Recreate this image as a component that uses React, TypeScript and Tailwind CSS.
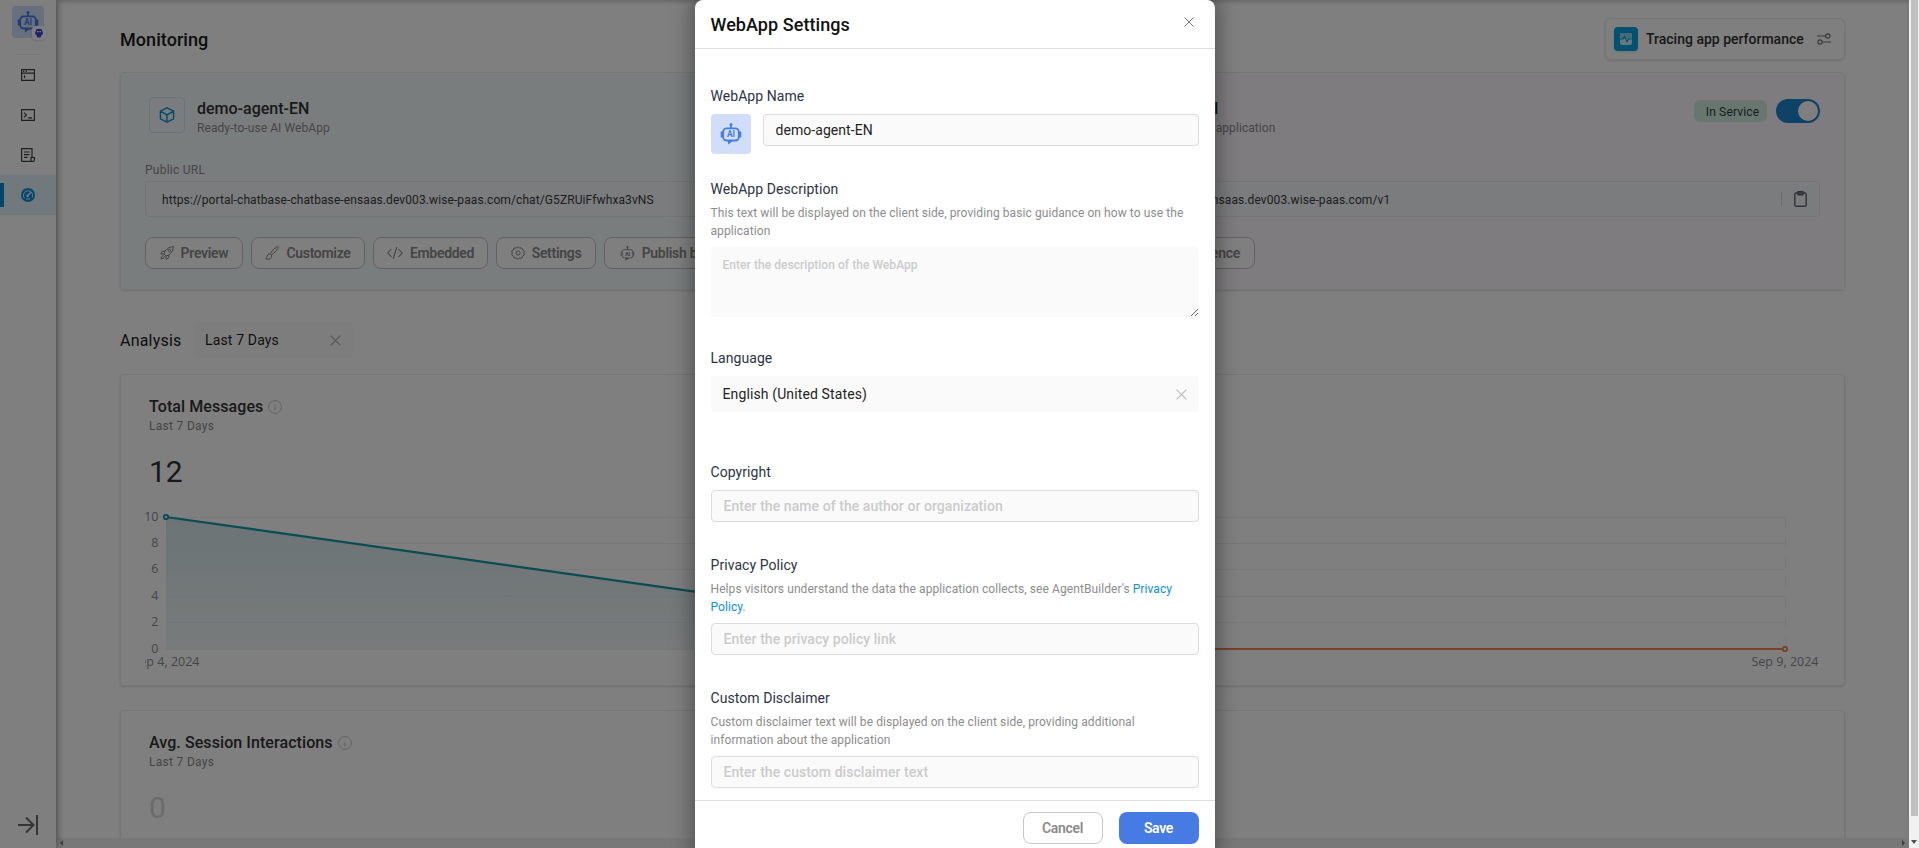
import React from "react";

const RobotIcon = ({ size, stroke = 1.8, line = false }: { size: number; stroke?: number; line?: boolean }) => (
  <svg width={size} height={size} viewBox="0 0 22 22" fill="none" stroke="currentColor" strokeWidth={stroke} strokeLinejoin="round">
    <circle cx="11" cy="1.600" r="1.500" fill="currentColor" stroke="none" />
    <path d="M11 2v3.500" />
    <rect x="3.200" y="5.300" width="15.600" height="12.200" rx="3.400" />
    <path d="M1.800 8.400v6M20.200 8.400v6" strokeWidth={line ? stroke : 2.2} />
    <path d="M7.600 17.600h6L8.200 21.600z" fill="currentColor" stroke="none" />
    <text x="11" y="14.400" textAnchor="middle" fontSize="8.500" fontWeight="700" fontFamily="Roboto" fill="currentColor" stroke="none">AI</text>
  </svg>
);

const Cross = ({ size, className = "" }: { size: number; className?: string }) => (
  <svg width={size} height={size} viewBox="0 0 10 10" fill="none" stroke="currentColor" strokeWidth="1" className={className}>
    <path d="M.5.5l9 9M9.500.500l-9 9" />
  </svg>
);

const InfoIcon = () => (
  <svg width="14" height="14" viewBox="0 0 14 14" fill="none" stroke="#c4c4c4" strokeWidth="1">
    <circle cx="7" cy="7" r="6.400" />
    <path d="M7 6.500v3.500M7 4.500v1" />
  </svg>
);

const stroke14 = { width: 14, height: 14, viewBox: "0 0 14 14", fill: "none", stroke: "currentColor", strokeWidth: 1.2 };

const navIcons = [
  <svg {...stroke14} key="a">
    <path d="M.6 1.600h12.800v10.800H.6zM.6 5.200h12.800M3.500 7.300v2.600" />
    <path d="M2 3.400h1.300M4.600 3.400h1.300" />
  </svg>,
  <svg {...stroke14} key="b">
    <path d="M.6 1.600h12.800v10.800H.6zM3 4.600l2.400 2.300L3 9.300M7 9.800h4" />
  </svg>,
  <svg {...stroke14} key="c">
    <path d="M11 9.500V.6H.6v11.800q0 1 1 1h10.300q1.500 0 1.500-1.500V9.500H10v2.400q0 1.500 1.500 1.500M3 4h5.500M3 6.700h5.500M3 9.400h3.500" />
  </svg>,
];

const NavRail = () => (
  <aside className="z-10 flex w-14 shrink-0 flex-col items-center bg-white pt-1.5 shadow-[2px_0_7px_rgba(0,0,0,0.35)]">
    <div className="relative flex size-8 shrink-0 items-center justify-center rounded bg-[#d1defa] text-[#477be4]">
      <RobotIcon size={22} />
      <div className="absolute -right-0.5 -bottom-0.5 flex size-3.5 items-center justify-center rounded bg-white shadow">
        <svg width="8" height="10" viewBox="0 0 8 10">
          <path d="M1 1.500q3-1.500 6 0v2h.8v3H7L5.500 9.500h-3L1 6.500H.2v-3H1z" fill="#4a3fd6" />
          <path d="M2 3.600h4" stroke="#fff" strokeWidth="1.200" strokeDasharray="1.500 1" />
        </svg>
      </div>
    </div>
    <div className="mt-4 h-px w-6 shrink-0 bg-[#ececec]" />
    {navIcons.map((icon, i) => (
      <div key={i} className="flex h-10 w-full shrink-0 items-center justify-center text-[#3f3f3f]">{icon}</div>
    ))}
    <div className="flex h-10 w-full shrink-0 items-center bg-[#e3f3f8]">
      <div className="h-6 w-1 bg-[#008ad6]" />
      <svg width="14" height="14" viewBox="0 0 14 14" className="ml-[17px]">
        <circle cx="7" cy="7" r="7" fill="#0a8fdc" />
        <path d="M3.200 10.200A4.700 4.700 0 1 1 11.200 9.600M5 11h4" stroke="#e3f3f8" fill="none" />
        <path d="M6.500 8L10 4.300" stroke="#e3f3f8" strokeWidth="1.500" />
        <circle cx="6.600" cy="7.900" r="1.300" fill="#e3f3f8" />
      </svg>
    </div>
    <svg width="20" height="20" viewBox="0 0 20 20" fill="none" stroke="#6b6b6b" strokeWidth="2" className="mt-auto mb-[13px]">
      <path d="M0 10h15M8 2.500l7.500 7.500L8 17.500M19 0v20" />
    </svg>
  </aside>
);

const CubeIcon = () => (
  <svg width="16" height="16" viewBox="0 0 16 16" fill="none" stroke="#0a93dc" strokeWidth="1.400" strokeLinejoin="round">
    <path d="M8 .800l6.600 3.400v7.600L8 15.200l-6.600-3.400V4.200zM1.400 4.200L8 7.800l6.600-3.600M8 7.800v7.400" />
  </svg>
);

const actionIcons: Record<string, React.ReactNode> = {
  Preview: (
    <svg {...stroke14} strokeWidth={1}>
      <path d="M13.500.5Q8.500.5 5 5L4 8l2 2 3-1q4.500-3.500 4.500-8.500zM5 5L2 5.500.8 8 4 8M9 9l-.5 3L6 13.300 6 10M3.500 9.500Q1 10 1 13q3 0 3.500-2.500" />
      <circle cx="9.400" cy="4.600" r="1.200" />
    </svg>
  ),
  Customize: (
    <svg {...stroke14} strokeWidth={1}>
      <path d="M5 7.500Q9 2 12.500.6q1 0 .9.900Q12 5 6.500 9zM5 7.500L6.500 9q1 2.500-1.500 3.800-2 .8-4.500.2 1.500-1 1.500-2.500Q2.500 8 5 7.500z" />
    </svg>
  ),
  Embedded: (
    <svg width="16" height="14" viewBox="0 0 16 14" fill="none" stroke="currentColor" strokeWidth="1.100">
      <path d="M4.500 3L.800 7l3.700 4M11.500 3l3.700 4-3.700 4M9.800 1.200L6.200 12.800" />
    </svg>
  ),
  Settings: (
    <svg {...stroke14} strokeWidth={1}>
      <path d="M7 .7l1.700 1.300 2.100-.1.800 2L13.300 5l-.6 2 .6 2-1.700 1.100-.8 2-2.100-.1L7 13.300 5.300 12l-2.100.1-.8-2L.7 9l.6-2-.6-2 1.700-1.100.8-2 2.100.1z" strokeLinejoin="round" />
      <circle cx="7" cy="7" r="2.100" />
    </svg>
  ),
  "Publish bot": <RobotIcon size={15} stroke={1.4} line />,
};

const ActionButton = ({ label, className = "" }: { label: string; className?: string }) => (
  <button className={`flex h-8 shrink-0 items-center justify-center gap-[7px] rounded-lg border border-[#c4c4c4] bg-white text-sm font-semibold tracking-[-0.3px] whitespace-nowrap text-[#8a8a8a] ${className}`}>
    {actionIcons[label]}
    {label}
  </button>
);

const UrlBox = ({ url, children }: { url: string; children?: React.ReactNode }) => (
  <div className="flex h-9 items-center rounded border border-[#e6e8ea] bg-[#f6f8fa]/90 pr-3 pl-4 text-xs tracking-[0.1px] text-[#3c3c3c]">
    <span className="pt-px whitespace-nowrap">{url}</span>
    {children}
  </div>
);

const ServiceCards = () => (
  <section className="mt-3 flex h-[218px] shrink-0 rounded border border-[#ececec] shadow-sm">
    <div className="w-1/2 bg-[#f5fbfd] px-6 pt-6">
      <div className="flex h-9 pl-1">
        <div className="flex size-9 items-center justify-center rounded border border-[#cfe9f0] bg-[#f4f8fb]"><CubeIcon /></div>
        <div className="ml-3 pt-0.5">
          <div className="text-base leading-5 font-medium text-[#333]">demo-agent-EN</div>
          <div className="text-xs leading-[18px] tracking-[0.08px] text-[#8c8c8c]">Ready-to-use AI WebApp</div>
        </div>
      </div>
      <div className="mt-7 mb-0.5 text-xs leading-[18px] tracking-[0.25px] text-[#8c8c8c]">Public URL</div>
      <UrlBox url="https://portal-chatbase-chatbase-ensaas.dev003.wise-paas.com/chat/G5ZRUiFfwhxa3vNS" />
      <div className="mt-5 flex gap-2">
        <ActionButton label="Preview" className="w-[98px]" />
        <ActionButton label="Customize" className="w-[114px]" />
        <ActionButton label="Embedded" className="w-[115px]" />
        <ActionButton label="Settings" className="w-[100px]" />
        <ActionButton label="Publish bot" className="w-[121px]" />
      </div>
    </div>
    <div className="w-1/2 bg-[#fdf8fd] px-6 pt-6">
      <div className="flex h-9">
        <div className="flex size-9 items-center justify-center rounded border border-[#ead7f0]"><CubeIcon /></div>
        <div className="ml-3 w-[164px] pt-0.5">
          <div className="text-right text-base leading-5 font-medium whitespace-nowrap text-[#333]">Backend service API</div>
          <div className="w-[221px] text-right text-xs leading-[18px] tracking-[0.08px] whitespace-nowrap text-[#8c8c8c]">Easily integrated into your application</div>
        </div>
        <div className="ml-auto flex items-start gap-[9px] pt-0.5">
          <span className="mt-px flex h-[22px] w-[73px] items-center justify-center rounded-md bg-[#d3ecdf] pt-px pl-1 text-xs tracking-[0.15px] text-[#23433a]">In Service</span>
          <span className="flex h-6 w-11 items-center justify-end rounded-full bg-[#1a86cc] p-0.5"><span className="size-5 rounded-full bg-white" /></span>
        </div>
      </div>
      <div className="mt-7 mb-0.5 text-xs leading-[18px] tracking-[0.25px] text-[#8c8c8c]">Service URL</div>
      <UrlBox url="https://portal-chatbase-chatbase-ensaas.dev003.wise-paas.com/v1">
        <span className="mr-3 ml-auto h-3.5 w-px bg-[#dcdde3]" />
        <svg width="13" height="16" viewBox="0 0 13 16" fill="none" stroke="#5f6672" strokeWidth="1.400">
          <rect x=".8" y="2" width="11.400" height="13.200" rx="1.200" />
          <path d="M4 .7h5v3H4z" />
        </svg>
      </UrlBox>
      <div className="mt-5 flex gap-2">
        <ActionButton label="API Key" className="w-[125px]" />
        <ActionButton label="API Reference" className="w-[115px]" />
      </div>
    </div>
  </section>
);

const TICKS = [10, 8, 6, 4, 2, 0];

const MessagesChart = () => (
  <svg width="1675" height="160" viewBox="145 509 1675 160" className="mt-[19px] -ml-1 block" fontFamily="'Open Sans', 'Noto Sans', sans-serif" fontSize="12.500" fill="#6e7079">
    <defs>
      <linearGradient id="area" x1="0" y1="0" x2="0" y2="1">
        <stop offset="0" stopColor="#d6e8ea" />
        <stop offset="1" stopColor="#f1f6f7" />
      </linearGradient>
    </defs>
    <path d="M166 517L913 622.500L1210 649H166z" fill="url(#area)" />
    {TICKS.map((t, i) => (
      <g key={t}>
        <text x="158.500" y={520.5 + i * 26.4} textAnchor="end" opacity=".8">{t}</text>
        <path d={`M166 ${Math.round(516.6 + i * 26.4) + 0.5}H1785`} stroke="#e0e6ee" strokeOpacity=".6" />
      </g>
    ))}
    <path d="M1785.500 517V649" stroke="#eceef2" strokeDasharray="10 10" />
    <path d="M166 517L913 622.500L1210 649" stroke="#109aa2" strokeWidth="2.200" fill="none" />
    <circle cx="166" cy="517" r="2.200" fill="#e6f2f4" stroke="#109aa2" strokeWidth="1.800" />
    <path d="M1210 649H1785" stroke="#f0804a" strokeWidth="2" />
    <circle cx="1785" cy="649" r="2.200" fill="#fff" stroke="#f0804a" strokeWidth="1.800" />
    <text x="166" y="666" textAnchor="middle" opacity=".8">Sep 4, 2024</text>
    <text x="1785" y="666" textAnchor="middle" opacity=".8">Sep 9, 2024</text>
  </svg>
);

const StatCard = ({ title, value, muted, className, children }: { title: string; value: string; muted?: boolean; className: string; children?: React.ReactNode }) => (
  <section className={`shrink-0 rounded border border-[#ececec] bg-white pr-6 pl-7 shadow-sm ${className}`}>
    <div className="flex items-center gap-[5px] pt-5 text-base leading-6 font-medium tracking-[0.08px] text-[#333]">{title}<InfoIcon /></div>
    <div className="text-xs leading-[14px] tracking-[0.3px] text-[#8c8c8c]">Last 7 Days</div>
    <div className={`mt-[21px] text-[30px] leading-9 ${muted ? "text-[#d6d6d6]" : "text-[#333]"}`}>{value}</div>
    {children}
  </section>
);

const Dashboard = () => (
  <main className="flex min-w-0 flex-1 flex-col shadow-[inset_0_3px_4px_-1px_rgba(0,0,0,0.2)]">
    <div className="flex h-[838px] flex-col overflow-hidden pt-[18px] pr-16 pl-16">
      <header className="flex h-[42px] shrink-0 items-center justify-between">
        <h1 className="pt-px text-lg font-medium tracking-[0.06px] text-[#1a1a1a]">Monitoring</h1>
        <div className="flex h-[42px] w-[240px] items-center rounded-md border border-[#ececec] pl-2 shadow-sm">
          <span className="flex size-6 items-center justify-center rounded bg-[#00a5e0] shadow">
            <svg width="12" height="12" viewBox="0 0 12 12">
              <rect width="12" height="12" rx="2" fill="#d9f0f8" />
              <rect width="12" height="6" rx="2" fill="#8fd4ee" />
              <path d="M0 6h3l1.500-2.500 2.500 5L8.500 6H12" stroke="#00a5e0" strokeWidth="1.200" fill="none" />
            </svg>
          </span>
          <span className="ml-2 w-[171px] text-sm font-medium whitespace-nowrap text-[#333]">Tracing app performance</span>
          <svg {...stroke14} className="text-[#6f6f6f]">
            <path d="M0 4h8.500M14 10H5.500" />
            <circle cx="10.800" cy="4" r="2.200" />
            <circle cx="3" cy="10" r="2.200" />
          </svg>
        </div>
      </header>
      <ServiceCards />
      <div className="mt-8 flex h-9 shrink-0 items-center">
        <h2 className="w-[73px] pt-px text-base tracking-[0.2px] text-[#1a1a1a]">Analysis</h2>
        <div className="flex h-9 w-40 items-center justify-between rounded-md bg-[#fbfbfb] pr-3 pl-3 text-sm tracking-[0.15px] text-[#1f1f1f]">
          Last 7 Days
          <Cross size={11} className="text-[#aaa]" />
        </div>
      </div>
      <StatCard title="Total Messages" value="12" className="mt-4 h-[312px]"><MessagesChart /></StatCard>
      <StatCard title="Avg. Session Interactions" value="0" muted className="mt-6 h-[312px]" />
    </div>
    <div className="flex h-2.5 items-center justify-between bg-[#f1f1f1] px-1">
      <svg width="3" height="6"><path d="M3 0L0 3l3 3z" fill="#7a7a7a" /></svg>
      <svg width="3" height="6"><path d="M0 0l3 3-3 3z" fill="#7a7a7a" /></svg>
    </div>
  </main>
);

const Label = ({ children, className = "" }: { children: React.ReactNode; className?: string }) => (
  <div className={`text-sm leading-5 tracking-[0.06px] text-[#2b3445] ${className}`}>{children}</div>
);
const Help = ({ children }: { children: React.ReactNode }) => (
  <p className="mt-[5px] mb-[7px] pr-1 text-xs leading-[18px] tracking-[0.08px] text-[#8c8c8c]">{children}</p>
);
const Field = ({ placeholder, value, className = "" }: { placeholder?: string; value?: string; className?: string }) => (
  <input
    readOnly
    value={value ?? ""}
    placeholder={placeholder}
    className={`block h-8 w-full rounded border border-[#dcdcdc] bg-[#fafafa] px-3 text-sm tracking-[0.06px] text-[#1f1f1f] placeholder:font-medium placeholder:text-[#cbcbcb] ${className}`}
  />
);

const SettingsModal = () => (
  <div className="flex h-[856px] w-[520px] flex-col rounded-lg bg-white shadow-[0_0_20px_4px_rgba(0,0,0,0.35)]">
    <header className="flex h-[49px] shrink-0 items-center justify-between border-b border-[#dedede] pr-[21px] pl-4">
      <h2 className="pt-0.5 text-lg font-medium tracking-[0.06px] text-[#111]">WebApp Settings</h2>
      <Cross size={10} className="mb-1 text-[#777]" />
    </header>
    <div className="h-[751px] shrink-0 px-4 pt-[37px]">
      <Label>WebApp Name</Label>
      <div className="mt-2 flex gap-3">
        <div className="flex size-10 shrink-0 items-center justify-center rounded bg-[#d1defa] text-[#477be4]"><RobotIcon size={22} /></div>
        <Field value="demo-agent-EN" />
      </div>
      <Label className="mt-[25px]">WebApp Description</Label>
      <Help>This text will be displayed on the client side, providing basic guidance on how to use the application</Help>
      <textarea readOnly placeholder="Enter the description of the WebApp" className="block h-[70px] w-full resize-y rounded bg-[#fafafa] px-3 py-2.5 text-xs leading-4 tracking-[0.05px] placeholder:font-medium placeholder:text-[#cbcbcb]" />
      <Label className="mt-[31px]">Language</Label>
      <div className="mt-2 flex h-9 items-center justify-between rounded bg-[#fafafa] px-3 text-sm tracking-[0.12px] text-[#1f1f1f]">
        English (United States)
        <Cross size={11} className="text-[#bbb]" />
      </div>
      <Label className="mt-[50px] mb-2">Copyright</Label>
      <Field placeholder="Enter the name of the author or organization" />
      <Label className="mt-[33px]">Privacy Policy</Label>
      <Help>Helps visitors understand the data the application collects, see AgentBuilder's <a className="text-[#0a93dc]">Privacy Policy</a>.</Help>
      <Field placeholder="Enter the privacy policy link" />
      <Label className="mt-[33px]">Custom Disclaimer</Label>
      <Help>Custom disclaimer text will be displayed on the client side, providing additional information about the application</Help>
      <Field placeholder="Enter the custom disclaimer text" />
    </div>
    <footer className="flex justify-end gap-4 border-t border-[#dedede] px-4 pt-[11px] text-sm font-semibold tracking-[-0.3px]">
      <button className="h-8 w-20 rounded-lg border border-[#c8c8c8] bg-white text-[#8a8a8a]">Cancel</button>
      <button className="h-8 w-20 rounded-lg bg-[#477be4] text-white">Save</button>
    </footer>
  </div>
);

export default function App() {
  return (
    <div className="relative flex h-[848px] w-[1919px] overflow-hidden bg-white font-[Roboto,sans-serif]">
      <NavRail />
      <Dashboard />
      <div className="flex w-2.5 shrink-0 flex-col items-center bg-[#f1f1f1]">
        <div className="h-[816px] w-[7px] bg-[#c1c1c1]" />
        <svg width="6" height="4" className="mt-auto mb-1"><path d="M0 0h6L3 4z" fill="#505050" /></svg>
      </div>
      <div className="absolute inset-y-0 right-2.5 left-0 z-20 flex justify-center bg-black/50">
        <SettingsModal />
      </div>
    </div>
  );
}
